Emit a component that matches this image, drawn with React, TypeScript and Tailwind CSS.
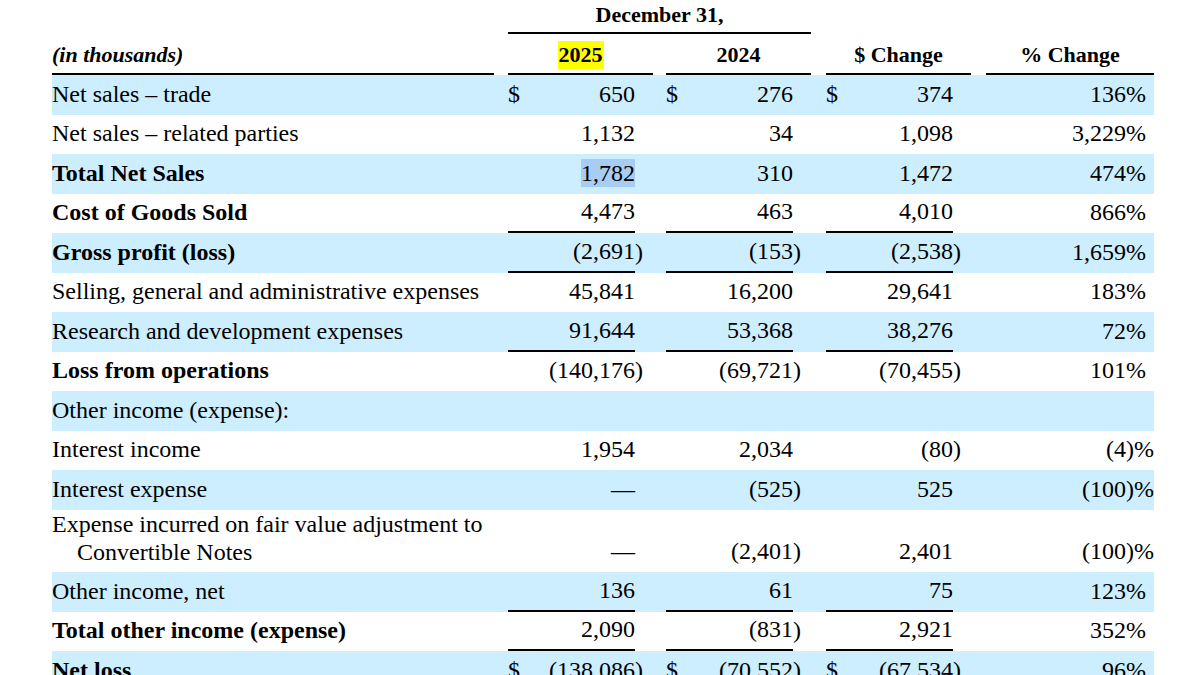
import React from 'react';

type Row = {
  label: string;
  sub?: string;
  bold?: boolean;
  shaded?: boolean;
  dollar?: boolean;
  line?: boolean;
  double?: boolean;
  vals?: [string, string, string, string];
  hl?: boolean;
};

const rows: Row[] = [
  { label: 'Net sales – trade', shaded: true, dollar: true, vals: ['650', '276', '374', '136%'] },
  { label: 'Net sales – related parties', vals: ['1,132', '34', '1,098', '3,229%'] },
  { label: 'Total Net Sales', bold: true, shaded: true, hl: true, vals: ['1,782', '310', '1,472', '474%'] },
  { label: 'Cost of Goods Sold', bold: true, line: true, vals: ['4,473', '463', '4,010', '866%'] },
  { label: 'Gross profit (loss)', bold: true, shaded: true, line: true, vals: ['(2,691)', '(153)', '(2,538)', '1,659%'] },
  { label: 'Selling, general and administrative expenses', vals: ['45,841', '16,200', '29,641', '183%'] },
  { label: 'Research and development expenses', shaded: true, line: true, vals: ['91,644', '53,368', '38,276', '72%'] },
  { label: 'Loss from operations', bold: true, vals: ['(140,176)', '(69,721)', '(70,455)', '101%'] },
  { label: 'Other income (expense):', shaded: true },
  { label: 'Interest income', vals: ['1,954', '2,034', '(80)', '(4)%'] },
  { label: 'Interest expense', shaded: true, vals: ['—', '(525)', '525', '(100)%'] },
  { label: 'Expense incurred on fair value adjustment to', sub: 'Convertible Notes', double: true, vals: ['—', '(2,401)', '2,401', '(100)%'] },
  { label: 'Other income, net', shaded: true, line: true, vals: ['136', '61', '75', '123%'] },
  { label: 'Total other income (expense)', bold: true, line: true, vals: ['2,090', '(831)', '2,921', '352%'] },
  { label: 'Net loss', bold: true, shaded: true, dollar: true, vals: ['(138,086)', '(70,552)', '(67,534)', '96%'] },
];

const grid =
  'grid grid-cols-[442px_14px_127px_18px_13px_127px_18px_15px_127px_18px_15px_140px_28px]';

// split "(2,691)" -> ["(2,691", ")"], "(100)%" -> ["(100", ")%"], "136%" -> ["136", "%"]
function split(v: string, pct: boolean): [string, string] {
  if (pct) {
    if (v.endsWith(')%')) return [v.slice(0, -2), ')%'];
    return [v.slice(0, -1), '%'];
  }
  if (v.endsWith(')')) return [v.slice(0, -1), ')'];
  return [v, ''];
}

function Money({ v, dollar, line, double, hl }: { v: string; dollar?: boolean; line?: boolean; double?: boolean; hl?: boolean }) {
  const [main, suf] = split(v, false);
  const align = double ? 'items-end pb-[7px]' : 'items-center pb-[2px]';
  return (
    <>
      <div className={`flex justify-between ${align} ${line ? 'border-b-2 border-black' : ''}`}>
        <span>{dollar ? '$' : ''}</span>
        <span className={hl ? 'bg-[#a8cdf5]' : ''}>{main}</span>
      </div>
      <div className={`flex ${align}`}>{suf}</div>
    </>
  );
}

function DataRow({ r }: { r: Row }) {
  const align = r.double ? 'items-end pb-[7px]' : 'items-center pb-[2px]';
  return (
    <div className={`${grid} ${r.double ? 'h-[62.5px]' : 'h-[39.5px]'} ${r.shaded ? 'bg-[#cceeff]' : ''}`}>
      <div
        className={`flex flex-col justify-center whitespace-nowrap ${r.double ? 'pb-[5px]' : 'pb-[2px]'} ${
          r.bold ? 'font-bold' : ''
        }`}
      >
        <span>{r.label}</span>
        {r.sub && <span className="pl-[25px]">{r.sub}</span>}
      </div>
      <div />
      {r.vals ? (
        <>
          <Money v={r.vals[0]} dollar={r.dollar} line={r.line} double={r.double} hl={r.hl} />
          <div />
          <Money v={r.vals[1]} dollar={r.dollar} line={r.line} double={r.double} />
          <div />
          <Money v={r.vals[2]} dollar={r.dollar} line={r.line} double={r.double} />
          <div />
          <div className={`flex justify-end ${align}`}>{split(r.vals[3], true)[0]}</div>
          <div className={`flex ${align}`}>{split(r.vals[3], true)[1]}</div>
        </>
      ) : null}
    </div>
  );
}

export default function App() {
  return (
    <div className="h-[675px] w-[1200px] overflow-hidden bg-white font-['Liberation_Serif','Times_New_Roman',serif] text-[24px] leading-[28px] text-black">
      <div className="ml-[52px] w-[1102px]">
        <div className={`${grid} h-[34px] text-[22px]`}>
          <div className="col-start-3 col-span-5 flex items-center justify-center border-b-2 border-black pb-[3px] font-bold">
            December 31,
          </div>
        </div>
        <div className={`${grid} h-[41px] text-[22px] font-bold`}>
          <div className="flex items-end border-b-2 border-black pb-[4px] italic">(in thousands)</div>
          <div className="col-start-3 col-span-2 flex items-end justify-center border-b-2 border-black pb-[4px]">
            <span className="bg-[#ffff00] px-[1px]">2025</span>
          </div>
          <div className="col-start-6 col-span-2 flex items-end justify-center border-b-2 border-black pb-[4px]">2024</div>
          <div className="col-start-9 col-span-2 flex items-end justify-center border-b-2 border-black pb-[4px]">$ Change</div>
          <div className="col-start-12 col-span-2 flex items-end justify-center border-b-2 border-black pb-[4px]">% Change</div>
        </div>
        {rows.map((r, i) => (
          <DataRow key={i} r={r} />
        ))}
      </div>
    </div>
  );
}
